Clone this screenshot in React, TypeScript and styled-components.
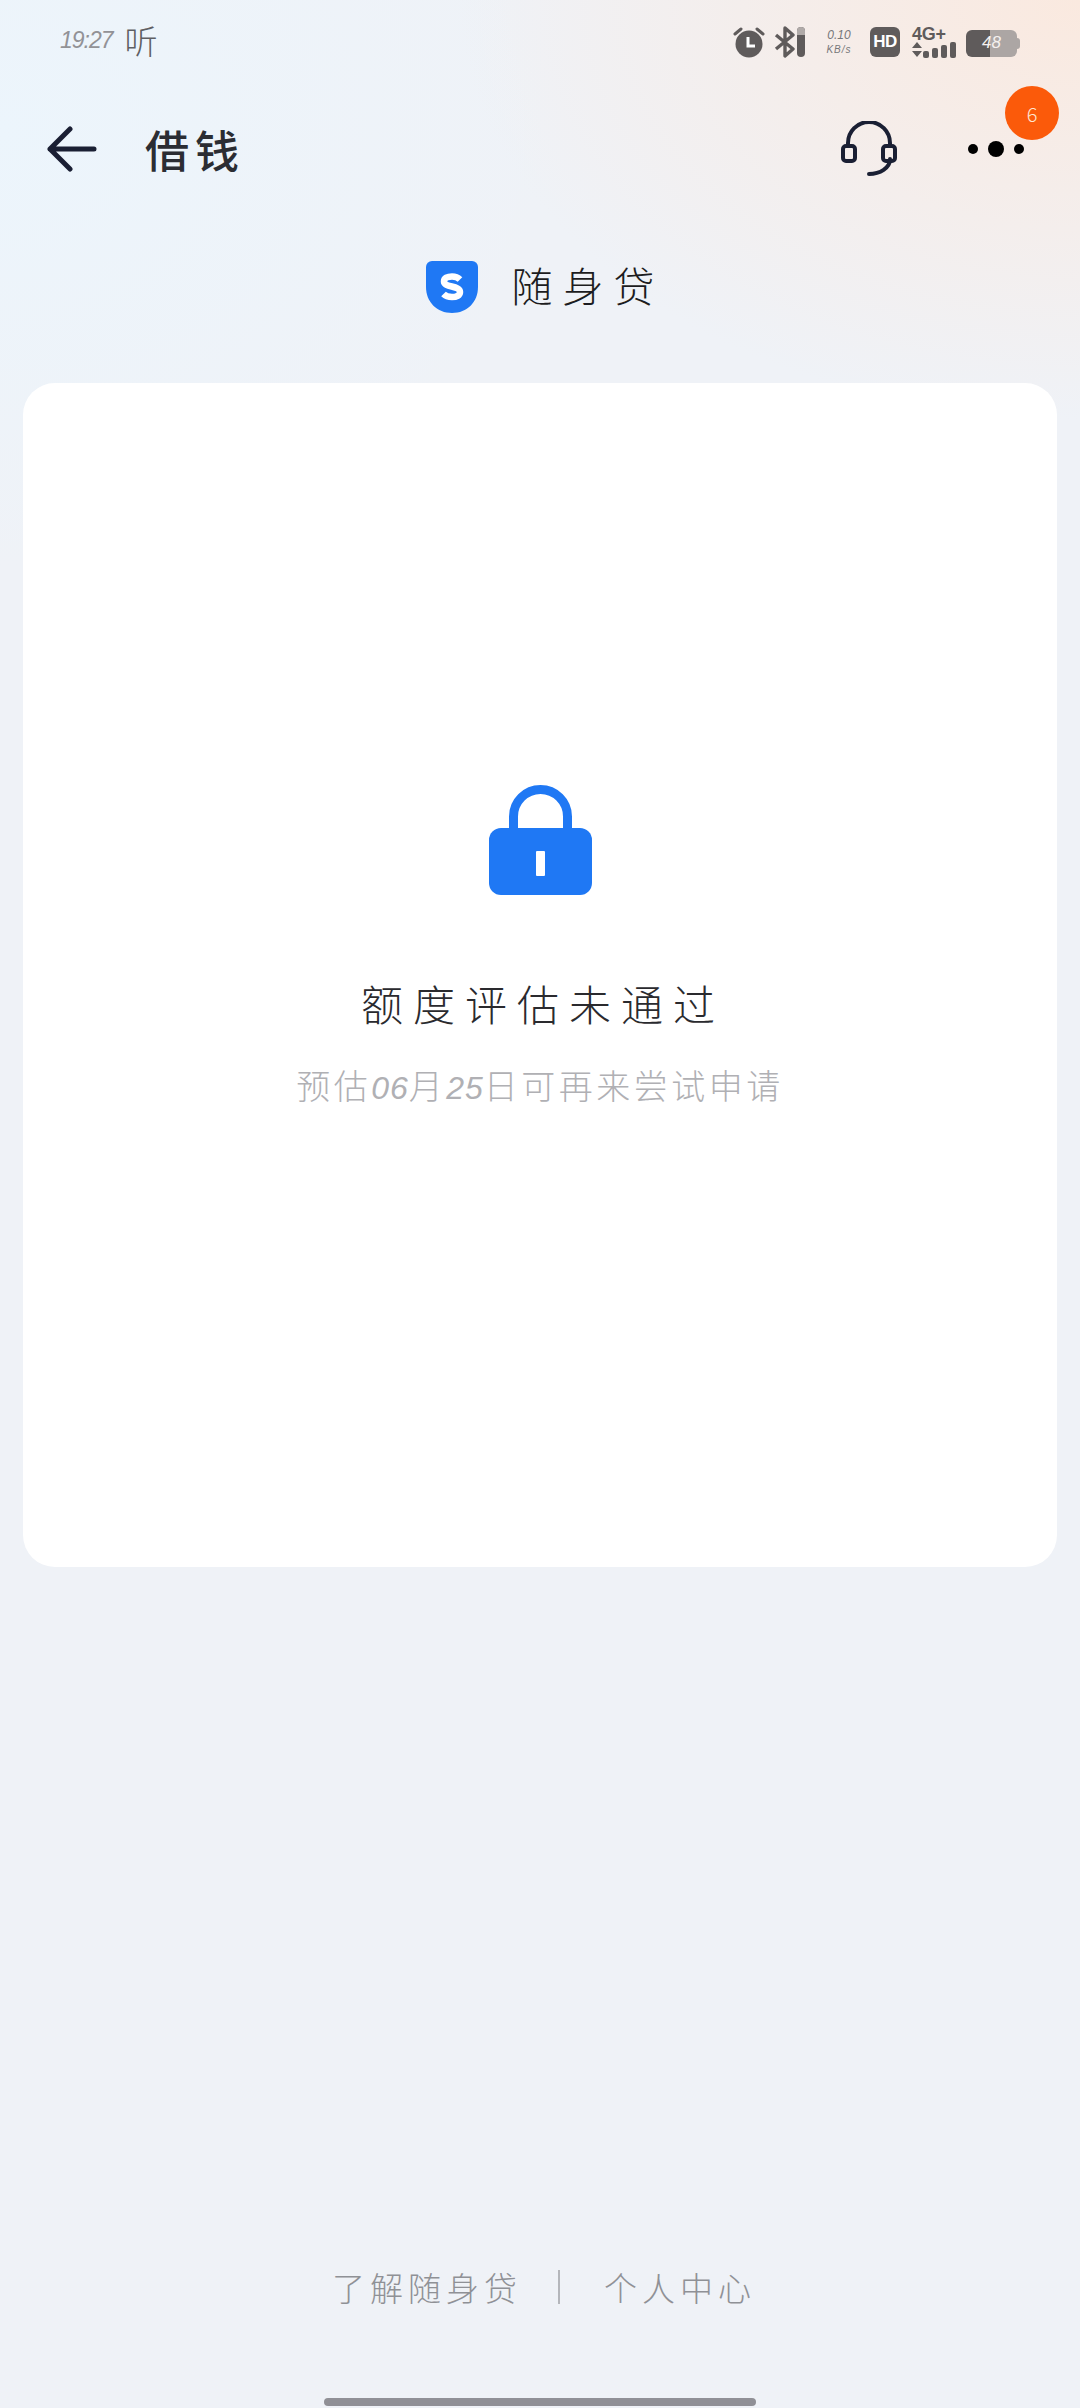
import React from 'react';
import styled, {createGlobalStyle} from 'styled-components';

const cjk = '"Noto Sans CJK SC", "Noto Sans", sans-serif';

const GlobalStyle = createGlobalStyle`
  html, body {
    margin: 0;
    padding: 0;
    background: #eff2f8;
  }
  * {
    box-sizing: border-box;
  }
`;

const Page = styled.div`
  position: relative;
  width: 1080px;
  height: 2408px;
  overflow: hidden;
  display: flex;
  flex-direction: column;
  font-family: ${cjk};
  background:
    radial-gradient(ellipse 620px 420px at 1080px 0px, #fae9df 0%, rgba(250, 233, 223, 0) 100%),
    radial-gradient(ellipse 560px 440px at 0px 130px, #ecf5fc 0%, rgba(236, 245, 252, 0) 100%),
    #eff2f7;
`;

const StatusBar = styled.div`
  height: 84px;
  padding: 22px 60px 0 60px;
  display: flex;
  align-items: flex-start;
  justify-content: space-between;
`;

const StatusLeft = styled.div`
  display: flex;
  align-items: center;
  gap: 12px;
  height: 36px;
`;

const Time = styled.span`
  font-family: "Liberation Sans", sans-serif;
  font-size: 23px;
  font-style: italic;
  font-weight: 400;
  letter-spacing: -1px;
  color: #929296;
`;

const Listen = styled.span`
  font-size: 33px;
  line-height: 36px;
  font-weight: 300;
  color: #5f5f63;
`;

const StatusRight = styled.div`
  display: flex;
  align-items: center;
  height: 36px;
  margin-top: 2px;
`;

const Speed = styled.div`
  width: 30px;
  margin: 0 16px 0 18px;
  display: flex;
  flex-direction: column;
  align-items: center;
  font-family: "Liberation Sans", sans-serif;
  font-style: italic;
  color: #77777a;
  span:first-child {
    font-size: 12px;
    line-height: 16px;
  }
  span:last-child {
    font-size: 10px;
    line-height: 14px;
    letter-spacing: 1px;
    white-space: nowrap;
  }
`;

const HdBadge = styled.div`
  width: 30px;
  height: 30px;
  border-radius: 6px;
  background: #5f5b5b;
  color: #fff;
  font-family: "Liberation Sans", sans-serif;
  font-size: 17px;
  font-weight: 700;
  letter-spacing: -0.5px;
  display: flex;
  align-items: center;
  justify-content: center;
  margin-right: 12px;
`;

const Signal = styled.div`
  width: 44px;
  margin-right: 10px;
  display: flex;
  flex-direction: column;
`;

const SignalLabel = styled.span`
  font-family: "Liberation Sans", sans-serif;
  font-size: 18px;
  line-height: 16px;
  font-weight: 700;
  color: #5f5b5b;
  letter-spacing: -0.3px;
`;

const Battery = styled.div`
  position: relative;
  width: 51px;
  height: 27px;
  margin: 2px 3px 0 0;
  border-radius: 6px;
  background: linear-gradient(90deg, #5f5b5b 0 48%, #aca6a4 48% 100%);
  display: flex;
  align-items: center;
  justify-content: center;
  font-family: "Liberation Sans", sans-serif;
  font-style: italic;
  font-size: 17px;
  color: #f4f0ee;
  &::after {
    content: '';
    position: absolute;
    right: -3px;
    top: 8px;
    width: 3px;
    height: 11px;
    border-radius: 0 3px 3px 0;
    background: #aca6a4;
  }
`;

const Header = styled.div`
  position: relative;
  height: 96px;
  margin-top: 17px;
  padding: 0 56px 0 47px;
  display: flex;
  align-items: center;
`;

const Title = styled.h1`
  margin: 0 0 0 48px;
  font-size: 44px;
  line-height: 56px;
  font-weight: 500;
  letter-spacing: 6px;
  color: #2b2d33;
`;

const HeaderActions = styled.div`
  margin-left: auto;
  display: flex;
  align-items: center;
  gap: 71px;
`;

const MoreButton = styled.div`
  display: flex;
  align-items: center;
  gap: 10px;
`;

const Dot = styled.span<{$size: number}>`
  width: ${p => p.$size}px;
  height: ${p => p.$size}px;
  border-radius: 50%;
  background: #000;
`;

const Badge = styled.span`
  position: absolute;
  top: -15px;
  right: 21px;
  width: 54px;
  height: 54px;
  border-radius: 50%;
  background: #fb5a0a;
  color: #ffe6d2;
  font-size: 20px;
  font-weight: 300;
  display: flex;
  align-items: center;
  justify-content: center;
`;

const Brand = styled.div`
  margin-top: 60px;
  height: 60px;
  display: flex;
  align-items: center;
  justify-content: center;
  gap: 34px;
  padding-left: 10px;
`;

const BrandName = styled.span`
  padding-bottom: 6px;
  font-size: 41px;
  font-weight: 300;
  letter-spacing: 10px;
  color: #1c1c20;
`;

const Card = styled.div`
  margin: 66px 23px 0;
  height: 1184px;
  border-radius: 32px;
  background: #fff;
  display: flex;
  flex-direction: column;
  align-items: center;
  padding-top: 402px;
`;

const CardTitle = styled.div`
  margin-top: 78px;
  font-size: 42px;
  line-height: 60px;
  font-weight: 300;
  letter-spacing: 10px;
  padding-left: 6px;
  color: #2a2a2e;
`;

const CardHint = styled.div`
  margin-top: 27px;
  font-size: 34px;
  line-height: 50px;
  font-weight: 300;
  letter-spacing: 3.5px;
  color: #b0b0b4;
  span {
    font-family: "Liberation Sans", sans-serif;
    font-style: italic;
    font-size: 32px;
    letter-spacing: 1px;
  }
`;

const Footer = styled.div`
  margin-top: auto;
  margin-bottom: 101px;
  height: 40px;
  padding-left: 8px;
  display: flex;
  align-items: center;
  justify-content: center;
  font-size: 33px;
  font-weight: 300;
  letter-spacing: 5px;
  color: #8f9196;
`;

const FooterDivider = styled.span`
  width: 2px;
  height: 34px;
  margin: 0 44px 0 36px;
  background: #b4b6bb;
`;

const HomeBar = styled.div`
  position: absolute;
  left: 324px;
  bottom: 2px;
  width: 432px;
  height: 8px;
  border-radius: 4px;
  background: #909096;
`;

const AlarmIcon = () => (
  <svg width="32" height="32" viewBox="0 0 32 32" style={{marginRight: 8}}>
    <circle cx="16" cy="18" r="13.5" fill="#5f5b5b" />
    <path d="M15 11v9h7" fill="none" stroke="#fff" strokeWidth="3" />
    <path d="M2 8l6-5M30 8l-6-5" stroke="#5f5b5b" strokeWidth="3" strokeLinecap="round" />
  </svg>
);

const BluetoothIcon = () => (
  <svg width="33" height="32" viewBox="0 0 33 32">
    <path
      d="M3 9l17 14-8 7V2l8 7L3 23"
      fill="none"
      stroke="#5f5b5b"
      strokeWidth="3.4"
      strokeLinejoin="round"
    />
    <rect x="24" y="1" width="8" height="30" rx="4" fill="#5f5b5b" />
    <path d="M24 9V5a4 4 0 0 1 8 0v4z" fill="#b0aaa8" />
  </svg>
);

const SignalIcon = () => (
  <svg width="44" height="16" viewBox="0 0 44 16">
    <path d="M0 6l5-6 5 6zM0 9h10l-5 6z" fill="#5f5b5b" />
    <rect x="11" y="9" width="6" height="7" rx="2" fill="#5f5b5b" />
    <rect x="20" y="6" width="6" height="10" rx="2" fill="#5f5b5b" />
    <rect x="29" y="3" width="6" height="13" rx="2" fill="#5f5b5b" />
    <rect x="38" y="0" width="6" height="16" rx="2" fill="#5f5b5b" />
  </svg>
);

const BackIcon = () => (
  <svg width="50" height="46" viewBox="0 0 50 46">
    <path
      d="M47 23H3M23 3L3 23l20 20"
      fill="none"
      stroke="#1a1f33"
      strokeWidth="5"
      strokeLinecap="round"
      strokeLinejoin="round"
    />
  </svg>
);

const HeadsetIcon = () => (
  <svg width="56" height="56" viewBox="0 0 56 56">
    <path
      d="M7 25v-3a21 21 0 0 1 42 0v3"
      fill="none"
      stroke="#1a1f33"
      strokeWidth="4"
    />
    <path
      d="M49 38c0 9-10 15-21 15"
      fill="none"
      stroke="#1a1f33"
      strokeWidth="4"
      strokeLinecap="round"
    />
    <rect x="2" y="25" width="12" height="15" rx="3" fill="none" stroke="#1a1f33" strokeWidth="4" />
    <rect x="42" y="25" width="12" height="15" rx="3" fill="none" stroke="#1a1f33" strokeWidth="4" />
  </svg>
);

const ShieldLogo = () => (
  <svg width="52" height="52" viewBox="0 0 52 52">
    <path
      d="M6 0h40a6 6 0 0 1 6 6v20c0 15-11 26-26 26S0 41 0 26V6a6 6 0 0 1 6-6z"
      fill="#1f78f4"
    />
    <path
      d="M34 18.500c-2-2-4.500-3-8-3-4.500 0-8 1.500-8 5 0 6.500 16 3.500 16 10.500 0 3.500-3.500 5-8 5-3.500 0-6.500-1-8.500-3"
      fill="none"
      stroke="#fff"
      strokeWidth="6.5"
    />
  </svg>
);

const LockIcon = () => (
  <svg width="103" height="110" viewBox="0 0 103 110">
    <path
      d="M24.500 46V31.500a27 27 0 0 1 54 0V46"
      fill="none"
      stroke="#1f78f4"
      strokeWidth="9"
    />
    <rect x="0" y="43" width="103" height="67" rx="12" fill="#1f78f4" />
    <rect x="47" y="66" width="9" height="25" rx="1" fill="#fff" />
  </svg>
);

export default function App() {
  return (
    <Page>
      <GlobalStyle />
      <StatusBar>
        <StatusLeft>
          <Time>19:27</Time>
          <Listen>听</Listen>
        </StatusLeft>
        <StatusRight>
          <AlarmIcon />
          <BluetoothIcon />
          <Speed>
            <span>0.10</span>
            <span>KB/s</span>
          </Speed>
          <HdBadge>HD</HdBadge>
          <Signal>
            <SignalLabel>4G+</SignalLabel>
            <SignalIcon />
          </Signal>
          <Battery>48</Battery>
        </StatusRight>
      </StatusBar>
      <Header>
        <BackIcon />
        <Title>借钱</Title>
        <HeaderActions>
          <HeadsetIcon />
          <MoreButton>
            <Dot $size={10} />
            <Dot $size={16} />
            <Dot $size={10} />
          </MoreButton>
        </HeaderActions>
        <Badge>6</Badge>
      </Header>
      <Brand>
        <ShieldLogo />
        <BrandName>随身贷</BrandName>
      </Brand>
      <Card>
        <LockIcon />
        <CardTitle>额度评估未通过</CardTitle>
        <CardHint>
          预估<span>06</span>月<span>25</span>日可再来尝试申请
        </CardHint>
      </Card>
      <Footer>
        <span>了解随身贷</span>
        <FooterDivider />
        <span>个人中心</span>
      </Footer>
      <HomeBar />
    </Page>
  );
}
